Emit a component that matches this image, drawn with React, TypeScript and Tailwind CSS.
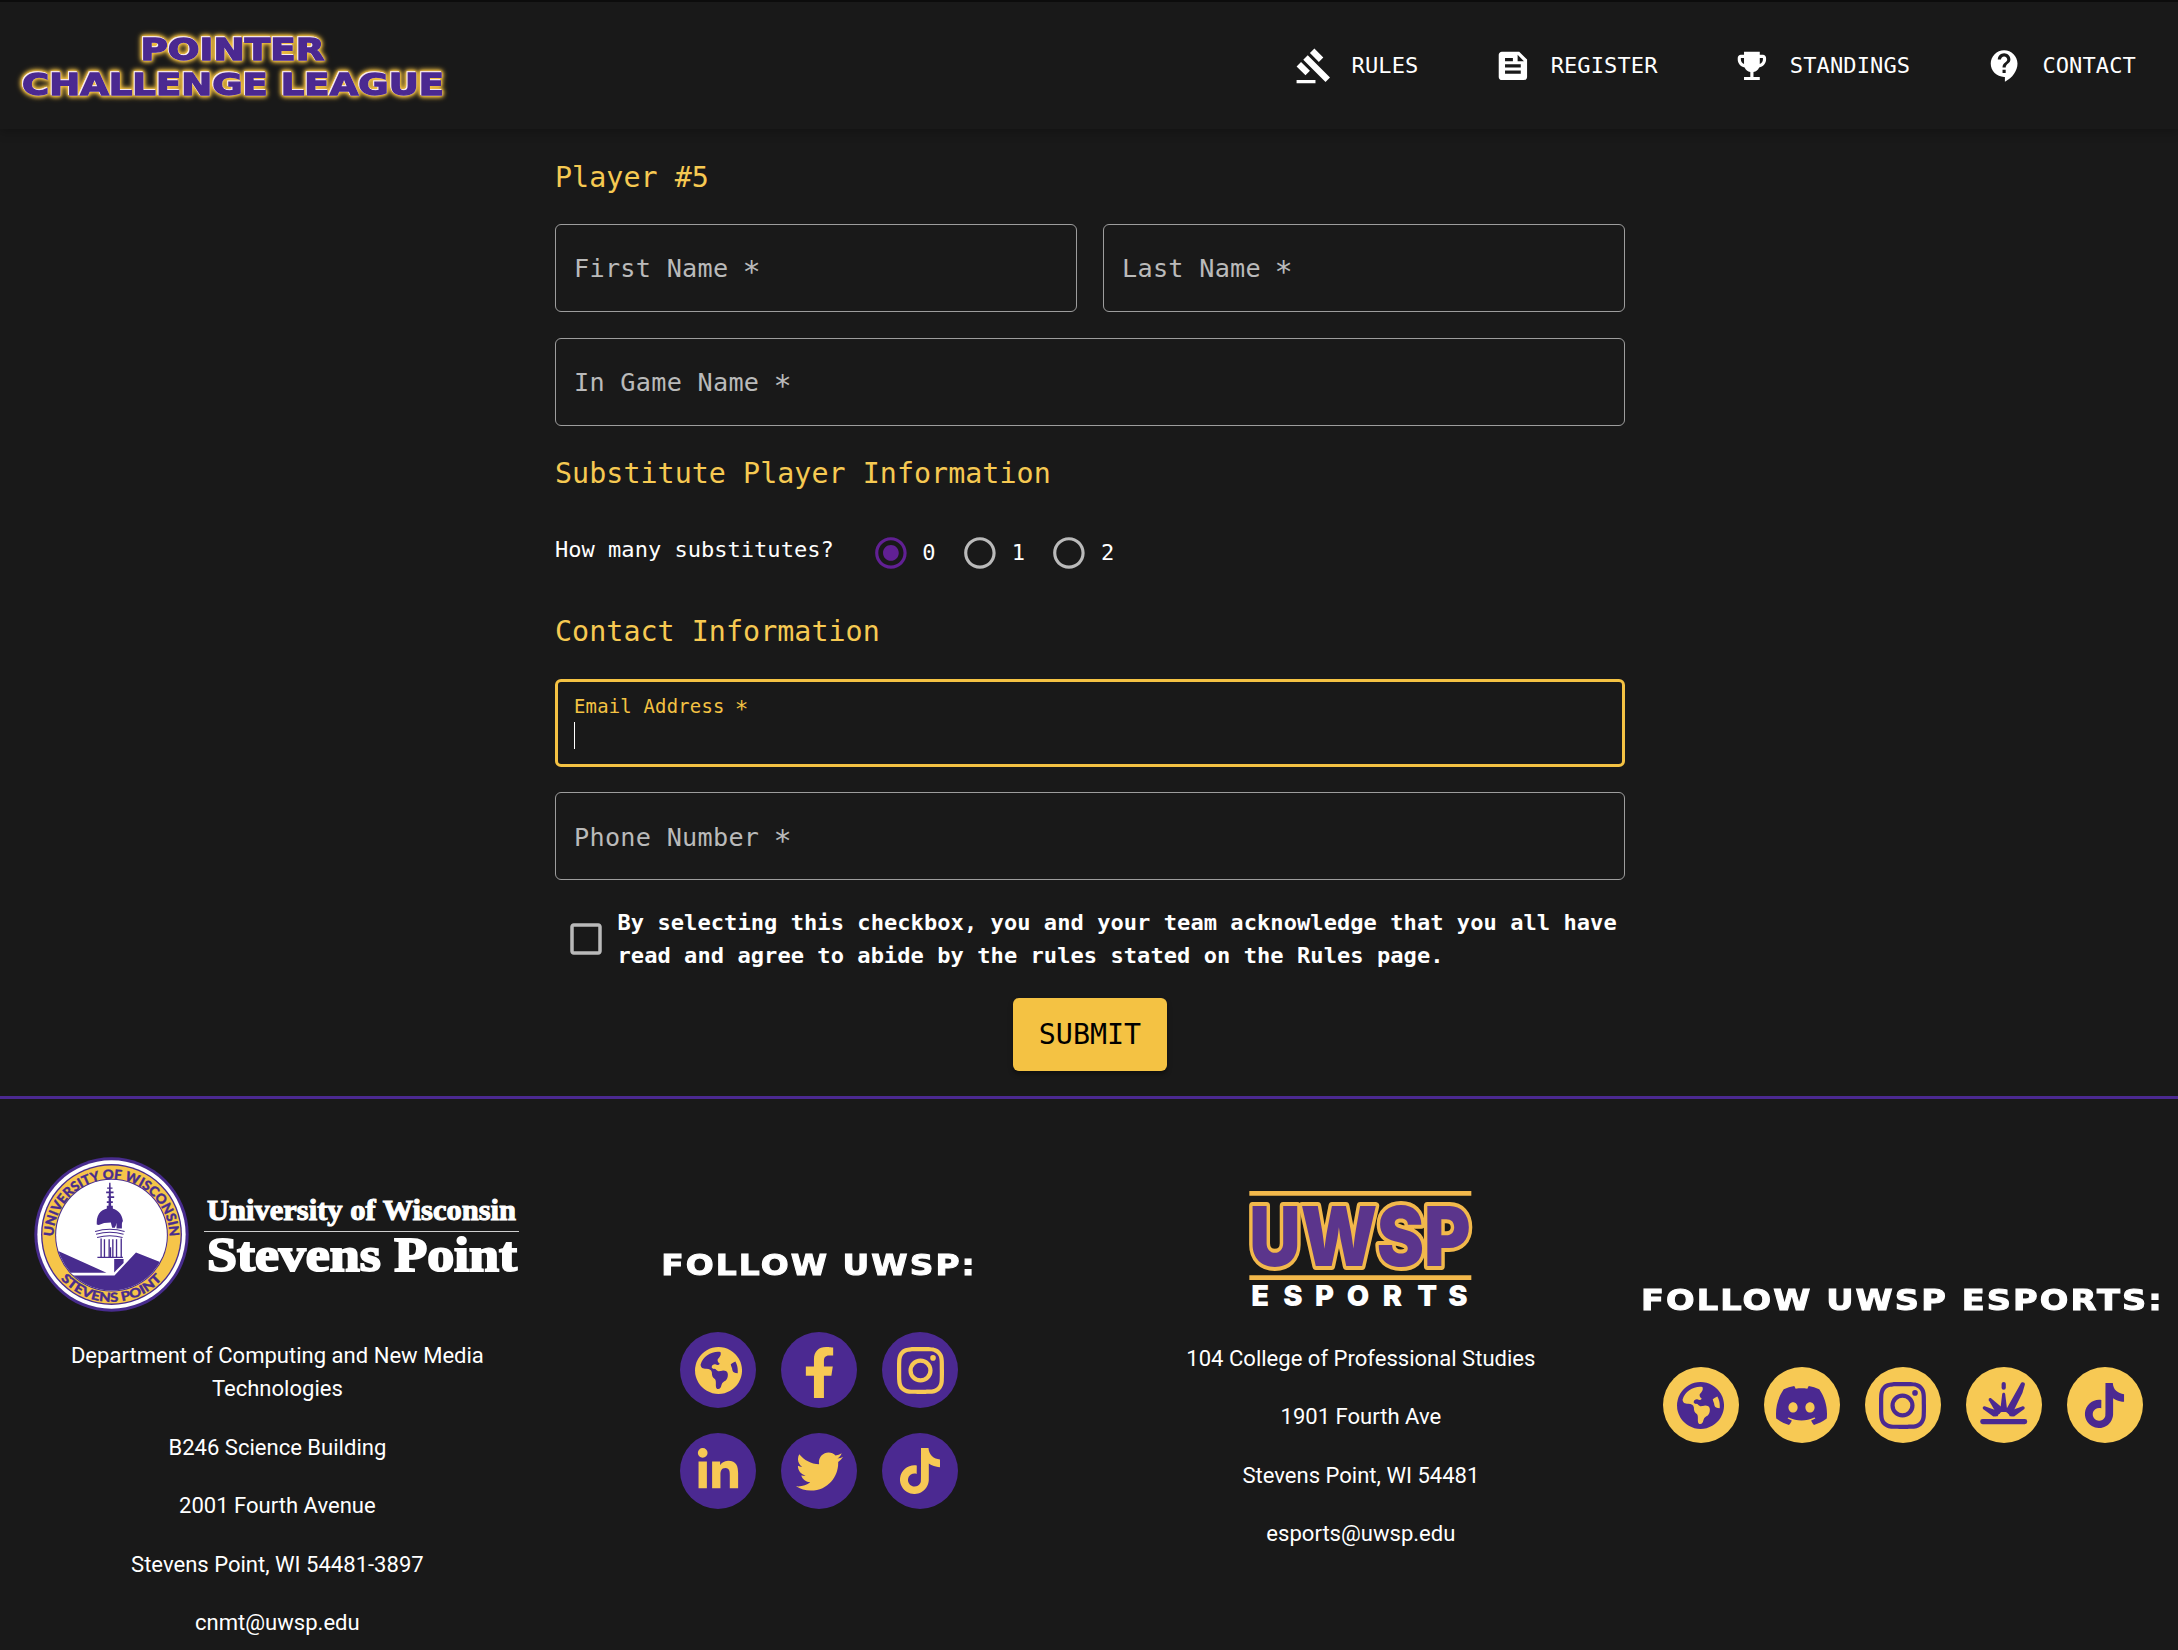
import React, { type ReactNode } from "react";
import {
  MdCheckBoxOutlineBlank,
  MdContactSupport,
  MdEmojiEvents,
  MdFeed,
  MdGavel,
  MdRadioButtonChecked,
  MdRadioButtonUnchecked,
} from "react-icons/md";
import { FaFacebookF, FaLinkedinIn, FaTwitter } from "react-icons/fa";
import { SiDiscord, SiInstagram, SiTiktok } from "react-icons/si";

const NAV = [
  { label: "RULES", icon: MdGavel },
  { label: "REGISTER", icon: MdFeed },
  { label: "STANDINGS", icon: MdEmojiEvents },
  { label: "CONTACT", icon: MdContactSupport },
];

function LeagueLogo() {
  return (
    <svg
      width="430"
      height="80"
      viewBox="17 26.5 430 80"
      className="font-['DejaVu_Sans'] font-bold [filter:drop-shadow(0.8px_0.8px_0_#f6e9ee)_drop-shadow(-1px_-1px_0_#f6e9ee)_drop-shadow(0_0_1px_#f4c243)_drop-shadow(0_0_2px_#f4c243)_drop-shadow(0_0_2px_#c99f38)]"
      fontSize="29.5"
      fill="#4b2991"
      stroke="#4b2991"
      strokeWidth="1.3"
      strokeLinejoin="miter"
    >
      <text x="140.5" y="60" textLength="184" lengthAdjust="spacingAndGlyphs">
        POINTER
      </text>
      <text x="22" y="95.4" textLength="422" lengthAdjust="spacingAndGlyphs">
        CHALLENGE LEAGUE
      </text>
    </svg>
  );
}

function GlobeIcon({ className }: { className?: string }) {
  return (
    <svg viewBox="162 380 142 142" className={className}>
      <path
        fill="currentColor"
        fillRule="evenodd"
        d="M233 380a71 71 0 1 0 .1 0ZM239 395C215 391 186 407 179 433C179 443 186 446 196 446C206 446 212 450 213 457C213 466 215 472 220 475C226 478 225 486 225 496C225 504 228 507 232 507C238 507 240 503 242 495C244 486 249 485 255 481C260 476 262 468 261 461C260 454 255 451 247 451C243 452 238 453 232 453C227 452 226 447 222 446C215 447 211 443 213 438C215 433 221 431 225 433C230 436 237 434 236 429C231 426 229 421 231 416C235 412 239 407 240 401ZM284 424C278 427 272 430 270 433C271 438 274 442 275 450C277 457 282 459 291 459C292 445 290 434 284 424Z"
      />
    </svg>
  );
}

function BurstIcon({ className }: { className?: string }) {
  return (
    <svg viewBox="14 14 48 48" className={className} fill="currentColor">
      <rect x="14.2" y="52" width="47" height="5.2" rx="2.4" />
      <rect x="35.6" y="15" width="4.2" height="7.8" rx="2.1" />
      <path d="M36.2 27c.5-1.8 2.6-1.8 3 0l1.2 10 1 8h-7.4l1-8Z" />
      <path d="M22.8 33.2c-.6-1.8 1-2.8 2.6-1.8l10.3 8.8L33.6 47l-4.6-3Z" />
      <path d="M17 42c-.9-1.9.5-3.2 2.4-2.6l8.4 3 6.5 3L30 49.2h-3Z" />
      <path d="M54.6 16.8c1-2.4 4.6-1.8 4.3.8l-2.5 8.4L46.8 45.5l-7-2.3Z" />
      <path d="M58.4 42c.9-1.9-.5-3.2-2.4-2.6l-8.4 3-6.5 3 4.3 3.8h3Z" />
      <path d="M27 49.2l5-6.7c3-2.8 8.4-2.8 11.4 0l5 6.7h-4.6c-2.6-6.2-9.6-6.2-12.2 0Z" />
    </svg>
  );
}

function Field({ label, focused }: { label: string; focused?: boolean }) {
  const text = (
    <>
      {label} <span className="inline-block translate-y-[0.14em] scale-120">*</span>
    </>
  );
  if (focused) {
    return (
      <div className="flex h-[88px] w-full flex-col rounded-[6px] border-3 border-[#f4c243] px-[16px] pt-[13px]">
        <span className="text-[18.9px] leading-[22px] tracking-[0.011em] text-[#f4c243]">{text}</span>
        <span className="mt-[5px] h-[27px] w-px bg-white" />
      </div>
    );
  }
  return (
    <div className="flex h-[88px] w-full items-center rounded-[6px] border border-[#9d9d9d] px-[18px] pt-[2px] text-[25.2px] tracking-[0.011em] text-[#bababa]">
      <span>{text}</span>
    </div>
  );
}

function Heading({ children }: { children: ReactNode }) {
  return <h2 className="text-[28.35px] leading-[45.4px] tracking-[0.03px] text-[#f6c952]">{children}</h2>;
}

function Radio({ label, checked }: { label: string; checked?: boolean }) {
  return (
    <div className="flex w-[89.4px] items-center">
      {checked ? (
        <MdRadioButtonChecked className="size-[37.8px] text-[#612094]" />
      ) : (
        <MdRadioButtonUnchecked className="size-[37.8px] text-[#bababa]" />
      )}
      <span className="pl-[13px]">{label}</span>
    </div>
  );
}

function Seal() {
  return (
    <svg width="155" height="155" viewBox="46 81 462 462" className="shrink-0 font-['Lato'] font-black">
      <defs>
        <clipPath id="seal-inner">
          <circle cx="277" cy="314" r="165" />
        </clipPath>
        <path id="arc-top" d="M104 320A173 173 0 0 1 450 320" />
        <path id="arc-bottom" d="M120 438A202 202 0 0 0 434 438" />
      </defs>
      <circle cx="277" cy="312" r="230" fill="#482c8e" />
      <circle cx="277" cy="312" r="221" fill="#fff" />
      <circle cx="277" cy="312" r="210" fill="#482c8e" />
      <circle cx="277" cy="312" r="206" fill="#f6c549" />
      <circle cx="277" cy="314" r="168" fill="#482c8e" />
      <circle cx="277" cy="314" r="165" fill="#fff" />
      <g clipPath="url(#seal-inner)" fill="#482c8e">
        <path d="M100 353L262 426H150V434H286L350 366L450 405V500H100Z" />
        <path d="M120 427h140l22-1v6H120Z" fill="#fff" />
        <path d="M285 385h28v12l-28 28Z" />
      </g>
      <g fill="#482c8e">
        <path d="M270 158h4l2 70h-8ZM264 172h16v4h-16ZM261 184h22v5h-22ZM265 198h20v5h-20ZM263 213h18v5h-18ZM263 226h18v10h-18Z" />
        <path d="M233 275c0-26 18-41 39-41s37 17 39 38l-4 8-14-2-6 14h-8l-4-16-20 2-16 6-6-2Z" />
        <path d="M292 276h16v18h-16Z" />
      </g>
      <g fill="none" stroke="#482c8e" strokeWidth="4">
        <path d="M228 303q44-14 88 0M231 311q41-12 82 0M234 321q38-10 76 0" strokeWidth="3" />
        <path d="M246 324v56M256 326v54M270 326v54M281 326v54M292 326v54M306 324v58" />
        <path d="M235 380h76M274 350v32" />
      </g>
      <g fill="#482c8e" stroke="#482c8e" strokeWidth="1">
        <text fontSize="40">
          <textPath href="#arc-top" startOffset="2" textLength="540" lengthAdjust="spacingAndGlyphs">
            UNIVERSITY OF WISCONSIN
          </textPath>
        </text>
        <text fontSize="38">
          <textPath href="#arc-bottom" startOffset="8" textLength="342" lengthAdjust="spacingAndGlyphs">
            STEVENS POINT
          </textPath>
        </text>
      </g>
    </svg>
  );
}

function UniversityLogo() {
  return (
    <div className="flex w-[486px] items-center">
      <Seal />
      <svg
        width="318"
        height="106"
        viewBox="203 1181 318 106"
        className="mt-px ml-[12.5px] shrink-0 font-['Liberation_Serif'] font-bold"
        fill="#fff"
        stroke="#fff"
      >
        <text x="208" y="1219" fontSize="28.5" strokeWidth="1" textLength="309" lengthAdjust="spacingAndGlyphs">
          University of Wisconsin
        </text>
        <path d="M205 1230.5H520" strokeWidth="1.2" stroke="#d0d0d0" />
        <text x="208" y="1270" fontSize="49" strokeWidth="2" textLength="310" lengthAdjust="spacingAndGlyphs">
          Stevens Point
        </text>
      </svg>
    </div>
  );
}

function EsportsLogo() {
  return (
    <svg width="222" height="130" viewBox="149 60 666 390" className="overflow-visible font-['Inter'] font-black">
      <path d="M147 63h666v14H147ZM147 316h666v14H147Z" fill="#f2b84b" />
      <text
        x="147"
        y="288"
        textLength="664"
        lengthAdjust="spacingAndGlyphs"
        fontSize="249"
        fill="#5b358c"
        stroke="#f2b84b"
        strokeWidth="24"
        strokeLinejoin="round"
        paintOrder="stroke"
      >
        UWSP
      </text>
      <text y="408" x="153 249 344 439 547 651 744" fontSize="87" fill="#fff">
        ESPORTS
      </text>
    </svg>
  );
}

function Social({ gold, children }: { gold?: boolean; children: ReactNode }) {
  return (
    <span
      className={
        gold
          ? "flex size-[76px] items-center justify-center rounded-full bg-[#f7c954] text-[#4b2991]"
          : "flex size-[76px] items-center justify-center rounded-full bg-[#4b2991] text-[#f7c954]"
      }
    >
      {children}
    </span>
  );
}

function Lines({ lines }: { lines: string[] }) {
  return (
    <div className="flex flex-col gap-[25.4px] text-center">
      {lines.map((l) => (
        <p key={l}>{l}</p>
      ))}
    </div>
  );
}

export default function App() {
  return (
    <div className="h-[1650px] w-[2178px] overflow-hidden border-t-2 border-[#0c0c0c] bg-[#191919] font-['DejaVu_Sans_Mono',monospace] text-[22.05px] leading-[33.1px] text-white">
      <header className="flex h-[127px] items-center justify-between pr-[42px] pl-[17px] shadow-[0_3px_10px_rgba(0,0,0,0.25)]">
        <LeagueLogo />
        <nav className="flex gap-[75.4px] tracking-[0.1px]">
          {NAV.map(({ label, icon: Icon }) => (
            <a key={label} className="flex items-center gap-[19px]">
              <Icon className="size-[37.8px]" />
              {label}
            </a>
          ))}
        </nav>
      </header>

      <main className="ml-[555px] flex h-[967px] w-[1070px] flex-col pt-[25.6px]">
        <Heading>Player #5</Heading>
        <div className="mt-[23.6px] flex gap-[26px]">
          <Field label="First Name" />
          <Field label="Last Name" />
        </div>
        <div className="mt-[26px]">
          <Field label="In Game Name" />
        </div>
        <div className="mt-[25px]">
          <Heading>Substitute Player Information</Heading>
        </div>
        <div className="mt-[26px] flex h-[62px] items-center">
          <span className="w-[316.5px] pb-[6px]">How many substitutes?</span>
          <Radio label="0" checked />
          <Radio label="1" />
          <Radio label="2" />
        </div>
        <div className="mt-[25px]">
          <Heading>Contact Information</Heading>
        </div>
        <div className="mt-[25px] flex flex-col gap-[25px]">
          <Field label="Email Address" focused />
          <Field label="Phone Number" />
        </div>
        <div className="mt-[25.5px] flex items-center">
          <MdCheckBoxOutlineBlank className="ml-[10px] size-[42px] shrink-0 text-[#bababa]" />
          <p className="ml-[10.5px] font-bold tracking-[0.05px] whitespace-nowrap">
            By selecting this checkbox, you and your team acknowledge that you all have
            <br />
            read and agree to abide by the rules stated on the Rules page.
          </p>
        </div>
        <button className="mt-[25.5px] h-[73px] w-[154px] self-center rounded-[6px] bg-[#f4c243] pt-px text-[28.35px] text-black shadow-[0_3px_5px_rgba(0,0,0,0.4)]">
          SUBMIT
        </button>
      </main>

      <footer className="grid grid-cols-4 border-t-3 border-[#4b2991] pr-[4.5px] pl-[6.5px] font-['Roboto',sans-serif]">
        <section className="flex flex-col items-center pt-[58px]">
          <UniversityLogo />
          <div className="mt-[27.3px] w-[440px]">
            <Lines
              lines={[
                "Department of Computing and New Media Technologies",
                "B246 Science Building",
                "2001 Fourth Avenue",
                "Stevens Point, WI 54481-3897",
                "cnmt@uwsp.edu",
              ]}
            />
          </div>
        </section>

        <section className="flex flex-col items-center pt-[150px]">
          <h3 className="origin-center scale-x-[1.135] font-['DejaVu_Sans'] text-[29px] font-bold tracking-[1.8px] whitespace-nowrap [-webkit-text-stroke:1px_white]">
            FOLLOW UWSP:
          </h3>
          <div className="mt-[50px] grid grid-cols-3 gap-[25px]">
            <Social>
              <GlobeIcon className="size-[47px]" />
            </Social>
            <Social>
              <FaFacebookF className="mt-[5px] size-[51px]" />
            </Social>
            <Social>
              <SiInstagram className="size-[47px]" />
            </Social>
            <Social>
              <FaLinkedinIn className="size-[46px]" />
            </Social>
            <Social>
              <FaTwitter className="size-[47px]" />
            </Social>
            <Social>
              <SiTiktok className="size-[46px]" />
            </Social>
          </div>
        </section>

        <section className="flex flex-col items-center pt-[91px]">
          <EsportsLogo />
          <div className="mt-[22px]">
            <Lines lines={["104 College of Professional Studies", "1901 Fourth Ave", "Stevens Point, WI 54481", "esports@uwsp.edu"]} />
          </div>
        </section>

        <section className="flex flex-col items-center pt-[185px]">
          <h3 className="origin-center scale-x-[1.16] font-['DejaVu_Sans'] text-[29px] font-bold tracking-[1.8px] whitespace-nowrap [-webkit-text-stroke:1px_white]">
            FOLLOW UWSP ESPORTS:
          </h3>
          <div className="mt-[50px] flex gap-[25px]">
            <Social gold>
              <GlobeIcon className="size-[47px]" />
            </Social>
            <Social gold>
              <SiDiscord className="size-[51px]" />
            </Social>
            <Social gold>
              <SiInstagram className="size-[47px]" />
            </Social>
            <Social gold>
              <BurstIcon className="size-[48px]" />
            </Social>
            <Social gold>
              <SiTiktok className="size-[45px]" />
            </Social>
          </div>
        </section>
      </footer>
    </div>
  );
}
